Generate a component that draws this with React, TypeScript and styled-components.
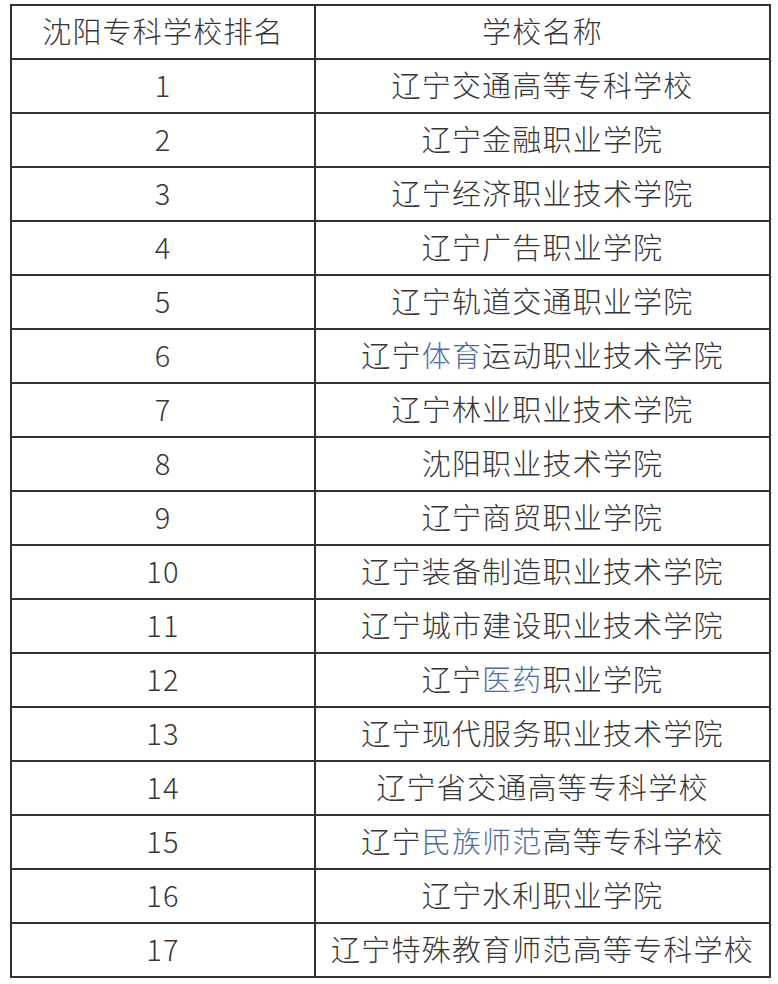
import React from 'react';
import styled, { createGlobalStyle } from 'styled-components';

const GlobalStyle = createGlobalStyle`
  body {
    margin: 0;
    background: #ffffff;
  }
`;

const Page = styled.div`
  padding: 4px 0 0 10px;
`;

const Table = styled.table`
  width: 761px;
  border-collapse: collapse;
  font-family: "Noto Sans CJK SC", "Noto Sans", sans-serif;
  font-size: 29px;
  font-weight: 300;
  color: #363636;
  letter-spacing: 1.2px;
`;

const Cell = styled.td<{ $rank?: boolean }>`
  height: 48px;
  padding: 0 0 4px;
  border: 2px solid #333333;
  text-align: center;
  vertical-align: middle;
  width: ${(p) => (p.$rank ? '302px' : 'auto')};
  line-height: 48px;
  white-space: nowrap;
`;

const Link = styled.span`
  color: #4e6ba6;
`;

type Row = { name: React.ReactNode };

const rows: Row[] = [
  { name: '辽宁交通高等专科学校' },
  { name: '辽宁金融职业学院' },
  { name: '辽宁经济职业技术学院' },
  { name: '辽宁广告职业学院' },
  { name: '辽宁轨道交通职业学院' },
  { name: <>辽宁<Link>体育</Link>运动职业技术学院</> },
  { name: '辽宁林业职业技术学院' },
  { name: '沈阳职业技术学院' },
  { name: '辽宁商贸职业学院' },
  { name: '辽宁装备制造职业技术学院' },
  { name: '辽宁城市建设职业技术学院' },
  { name: <>辽宁<Link>医药</Link>职业学院</> },
  { name: '辽宁现代服务职业技术学院' },
  { name: '辽宁省交通高等专科学校' },
  { name: <>辽宁<Link>民族师范</Link>高等专科学校</> },
  { name: '辽宁水利职业学院' },
  { name: '辽宁特殊教育师范高等专科学校' },
];

export default function App() {
  return (
    <Page>
      <GlobalStyle />
      <Table>
        <tbody>
          <tr>
            <Cell $rank>沈阳专科学校排名</Cell>
            <Cell>学校名称</Cell>
          </tr>
          {rows.map((r, i) => (
            <tr key={i}>
              <Cell $rank>{i + 1}</Cell>
              <Cell>{r.name}</Cell>
            </tr>
          ))}
        </tbody>
      </Table>
    </Page>
  );
}
